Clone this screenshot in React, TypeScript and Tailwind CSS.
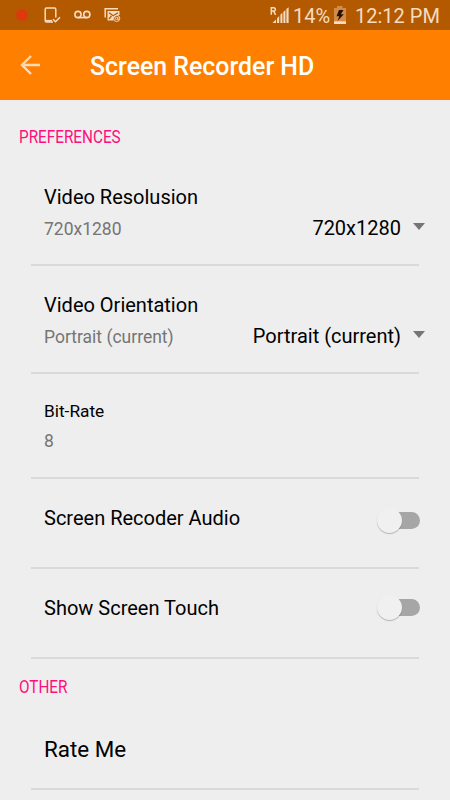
import { ReactNode } from "react"
import clsx from "clsx"

const StatusBar = () => {
    return (
        <div className="h-[30px] bg-[#b35a00] flex items-center text-[#f6dcc2]">
            <div className="ml-4 h-3 w-3 rounded-full bg-[#dc3a0c]" />
            <svg className="ml-4 shrink-0" width="17" height="18" viewBox="0 0 17 18" fill="none" stroke="currentColor">
                <path d="M9 16H2.5Q1.2 16 1.2 14.7V3.3Q1.2 2 2.5 2H10.5Q11.8 2 11.8 3.3V11.5" strokeWidth="1.5" />
                <path d="M2 14.8H8" strokeWidth="1.8" />
                <path d="M9 13.2L11.5 15.8L16 11.3" strokeWidth="1.5" />
            </svg>
            <svg className="ml-[13px] shrink-0" width="18" height="10" viewBox="0 0 18 10" fill="none" stroke="currentColor" strokeWidth="1.6">
                <circle cx="4" cy="4.5" r="3.1" />
                <circle cx="12.8" cy="4.5" r="3.1" />
                <path d="M4 7.6H12.8" />
            </svg>
            <svg className="ml-3 shrink-0" width="18" height="16" viewBox="0 0 18 16" fill="none" stroke="currentColor">
                <path d="M1.2 10.5V1.7H14" strokeWidth="1.5" />
                <path d="M3.5 4H15.5V8H13L9.5 11V13.5H3.5Z" fill="currentColor" stroke="none" />
                <path d="M5 5.8L9.2 8.8L14 5.8M5 12L7.5 9" stroke="#b35a00" strokeWidth="1.3" />
                <circle cx="12.7" cy="11.4" r="3.1" strokeWidth="0.9" />
                <circle cx="12.5" cy="11.4" r="1.2" strokeWidth="0.9" />
                <path d="M13.9 10V12.3Q14.7 12.8 15.5 12" strokeWidth="0.9" />
            </svg>
            <svg className="ml-auto shrink-0" width="20" height="18" viewBox="0 0 20 18" fill="currentColor">
                <path d="M1.3 8.8V1.8H3.7Q5.4 1.8 5.4 3.4T3.7 5.1H1.3M3.6 5.1L5.6 8.8" fill="none" stroke="currentColor" strokeWidth="1.5" />
                <path d="M2.5 17L6 13.5V17Z" />
                <path d="M7 12.2L9.2 10V17H7Z" />
                <path d="M10.4 8.8L12.4 6.8V17H10.4Z" />
                <path d="M13.4 6L15.4 4V17H13.4Z" />
                <path d="M16.4 3L18.6 1.2V17H16.4Z" />
            </svg>
            <span className="ml-[3px] mt-px w-[37px] text-[20px] leading-[30px]">14%</span>
            <svg className="ml-[3px] shrink-0" width="14" height="20" viewBox="0 0 14 20">
                <path d="M4 1H9.5V3H13V19H1V3H4Z" fill="#d58b48" />
                <path d="M1 16.3H13V19H1Z" fill="#f6dcc2" />
                <path d="M6 5L3.5 11.2H6.3L4.5 16L10.8 9.2H7.8L10.5 5Z" fill="#241000" />
            </svg>
            <span className="ml-2 mr-3 mt-px w-[83px] whitespace-nowrap text-[20px] leading-[30px]">12:12 PM</span>
        </div>
    )
}

const SectionTitle = ({ children, className }: { children: ReactNode, className?: string }) => {
    return (
        <div className={clsx("pl-[18.5px] text-[18px] leading-5 text-[#ff0f7b]", className)}>
            <span className="inline-block origin-left scale-x-[0.85]">{children}</span>
        </div>
    )
}

interface RowProps {
    title: string
    summary?: string
    className: string
    titleClassName?: string
    children?: ReactNode
}

const Row = ({ title, summary, className, titleClassName = "text-[20px] leading-6", children }: RowProps) => {
    return (
        <div className={clsx("ml-[31px] mr-[31px] flex justify-between border-b-2 border-[#d9d9d9] pl-[13px]", className)}>
            <div className="flex flex-col gap-2.5 whitespace-nowrap">
                <div className={titleClassName}>{title}</div>
                {summary && <div className="text-[17.5px] leading-5 text-[#757575]">{summary}</div>}
            </div>
            {children}
        </div>
    )
}

const Select = ({ value }: { value: string }) => {
    return (
        <div className="-mr-1.5 mt-[31px] flex h-6 items-center gap-3 whitespace-nowrap text-[20px] leading-6">
            <span>{value}</span>
            <svg className="-mt-1" width="12" height="7" viewBox="0 0 12 7" fill="#757575">
                <path d="M0 0H12L6 7Z" />
            </svg>
        </div>
    )
}

const Toggle = ({ className }: { className: string }) => {
    return (
        <div className={clsx("-mr-px flex h-[25px] w-[43px] items-center", className)}>
            <div className="z-10 h-[25px] w-[25px] shrink-0 rounded-full bg-[#f0f0f0] shadow-[0_1px_1px_rgba(0,0,0,0.25)]" />
            <div className="-ml-3 h-[17px] w-[30px] shrink-0 rounded-r-full bg-[#a6a6a6]" />
        </div>
    )
}

const App = () => {
    return (
        <div className="h-[800px] w-[450px] overflow-hidden bg-[#eeeeee] font-['Roboto',sans-serif] text-black">
            <StatusBar />
            <div className="flex h-[70px] items-center bg-[#ff8000] pl-5">
                <svg width="20" height="20" viewBox="0 0 20 20" fill="none" stroke="#ffd9b3" strokeWidth="2.4">
                    <path d="M20 10H2M11 1L2 10L11 19" />
                </svg>
                <h1 className="ml-[50px] mt-1 text-[24.9px] font-medium leading-7 text-white">Screen Recorder HD</h1>
            </div>
            <SectionTitle className="h-[58px] pt-[27px]">PREFERENCES</SectionTitle>
            <Row className="h-[108px] pt-[27px]" title="Video Resolusion" summary="720x1280">
                <Select value="720x1280" />
            </Row>
            <Row className="h-[108px] pt-[27px]" title="Video Orientation" summary="Portrait (current)">
                <Select value="Portrait (current)" />
            </Row>
            <Row className="h-[105px] pt-[27px]" titleClassName="text-[17.3px] leading-5" title="Bit-Rate" summary="8" />
            <Row className="h-[90px] pt-[27px]" title="Screen Recoder Audio">
                <Toggle className="mt-0.5" />
            </Row>
            <Row className="h-[90px] pt-[27px]" title="Show Screen Touch">
                <Toggle className="-mt-px" />
            </Row>
            <SectionTitle className="h-[55px] pt-[18px]">OTHER</SectionTitle>
            <Row className="h-[76px] pt-[21px]" titleClassName="text-[22.4px] leading-7" title="Rate Me" />
        </div>
    )
}

export default App
